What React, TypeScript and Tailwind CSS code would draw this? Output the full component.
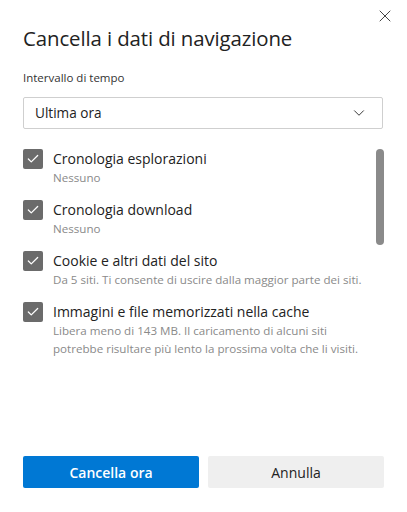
import { X, ChevronDown, Check } from "lucide-react";

const items = [
  { title: "Cronologia esplorazioni", sub: ["Nessuno"] },
  { title: "Cronologia download", sub: ["Nessuno"] },
  { title: "Cookie e altri dati del sito", sub: ["Da 5 siti. Ti consente di uscire dalla maggior parte dei siti."] },
  {
    title: "Immagini e file memorizzati nella cache",
    sub: ["Libera meno di 143 MB. Il caricamento di alcuni siti", "potrebbe risultare più lento la prossima volta che li visiti."],
  },
];

export default function App() {
  return (
    <div className="w-[407px] h-[512px] bg-white text-[#1b1b1b] font-['Open_Sans',sans-serif] relative overflow-hidden">
      {/* close */}
      <button className="absolute right-[12px] top-[6px] text-[#444]">
        <X size={20} strokeWidth={1.2} />
      </button>

      <div className="px-[23px] pt-[24px] flex flex-col h-full">
        <h1 className="text-[20.4px] leading-[28px] text-[#222] tracking-[-0.1px]">Cancella i dati di navigazione</h1>

        <label className="mt-[17px] text-[11.5px] leading-[18px] text-[#333]">Intervallo di tempo</label>
        <div className="mt-[10px] h-[32px] border border-[#cfcfcf] rounded-[2px] flex items-center justify-between pl-[11px] pr-[14px] mr-[1px]">
          <span className="text-[13.6px] text-[#222]">Ultima ora</span>
          <ChevronDown size={18} strokeWidth={1.3} className="text-[#333]" />
        </div>

        <div className="mt-[20px] flex h-[246px]">
          <div className="flex-1 flex flex-col gap-[13px]">
            {items.map((it) => (
              <div key={it.title} className="flex gap-[10px]">
                <div className="w-[20px] h-[20px] shrink-0 rounded-[2px] bg-[#6b6b6b] flex items-center justify-center">
                  <Check size={14} strokeWidth={2.2} className="text-white" />
                </div>
                <div className="flex flex-col">
                  <span className="text-[14px] leading-[20px] text-[#222]">{it.title}</span>
                  {it.sub.map((s) => (
                    <span key={s} className="text-[11.6px] leading-[18px] text-[#8a8a8a] whitespace-nowrap">{s}</span>
                  ))}
                </div>
              </div>
            ))}
          </div>
          <div className="w-[8px] h-[96px] rounded-full bg-[#8a8a8a] ml-[2px]" />
        </div>

        <div className="mt-auto mb-[24px] flex gap-[9px]">
          <button className="flex-1 h-[32px] bg-[#0078d4] text-white text-[14px] font-semibold rounded-[2px]">Cancella ora</button>
          <button className="flex-1 h-[32px] bg-[#efefef] text-[#222] text-[14px] rounded-[2px]">Annulla</button>
        </div>
      </div>
    </div>
  );
}
